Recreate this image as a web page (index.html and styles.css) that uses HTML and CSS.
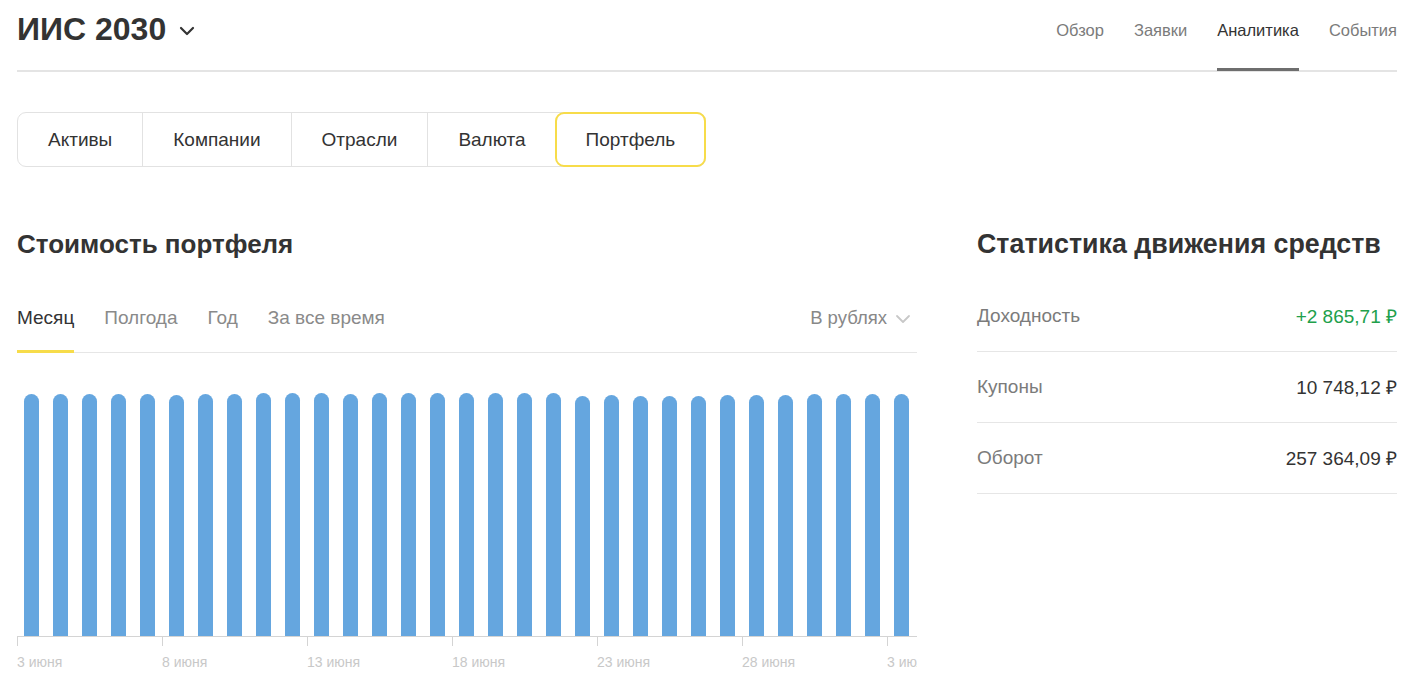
FILE: index.html
```html
<!DOCTYPE html>
<html lang="ru">
<head>
<meta charset="utf-8">
<link rel="stylesheet" href="styles.css">
</head>
<body>
<div class="page">
  <header class="header">
    <div class="account">
      <h1 class="account-title">ИИС 2030</h1>
      <svg class="account-chevron" width="16" height="10" viewBox="0 0 16 10"><path d="M2 2 L8 8 L14 2" fill="none" stroke="#333" stroke-width="2.2" stroke-linecap="round" stroke-linejoin="round"/></svg>
    </div>
    <nav class="nav">
      <a class="nav-item">Обзор</a>
      <a class="nav-item">Заявки</a>
      <a class="nav-item nav-item-active">Аналитика</a>
      <a class="nav-item">События</a>
    </nav>
  </header>

  <div class="segments">
    <div class="segment">Активы</div>
    <div class="segment">Компании</div>
    <div class="segment">Отрасли</div>
    <div class="segment">Валюта</div>
    <div class="segment segment-active">Портфель</div>
  </div>

  <div class="content">
    <section class="chart-col">
      <h2 class="section-title">Стоимость портфеля</h2>
      <div class="periods">
        <div class="period period-active">Месяц</div>
        <div class="period">Полгода</div>
        <div class="period">Год</div>
        <div class="period">За все время</div>
        <div class="currency">В рублях
          <svg class="currency-chevron" width="16" height="10" viewBox="0 0 16 10"><path d="M2 2 L8 8 L14 2" fill="none" stroke="#c8c8c8" stroke-width="1.8" stroke-linecap="round" stroke-linejoin="round"/></svg>
        </div>
      </div>
      <div class="chart">
        <div class="bars">
          <div class="slot"><div class="bar" style="height:242px"></div></div>
          <div class="slot"><div class="bar" style="height:242px"></div></div>
          <div class="slot"><div class="bar" style="height:242px"></div></div>
          <div class="slot"><div class="bar" style="height:242px"></div></div>
          <div class="slot"><div class="bar" style="height:242px"></div></div>
          <div class="slot"><div class="bar" style="height:241px"></div></div>
          <div class="slot"><div class="bar" style="height:242px"></div></div>
          <div class="slot"><div class="bar" style="height:242px"></div></div>
          <div class="slot"><div class="bar" style="height:243px"></div></div>
          <div class="slot"><div class="bar" style="height:243px"></div></div>
          <div class="slot"><div class="bar" style="height:243px"></div></div>
          <div class="slot"><div class="bar" style="height:242px"></div></div>
          <div class="slot"><div class="bar" style="height:243px"></div></div>
          <div class="slot"><div class="bar" style="height:243px"></div></div>
          <div class="slot"><div class="bar" style="height:243px"></div></div>
          <div class="slot"><div class="bar" style="height:243px"></div></div>
          <div class="slot"><div class="bar" style="height:243px"></div></div>
          <div class="slot"><div class="bar" style="height:243px"></div></div>
          <div class="slot"><div class="bar" style="height:243px"></div></div>
          <div class="slot"><div class="bar" style="height:240px"></div></div>
          <div class="slot"><div class="bar" style="height:241px"></div></div>
          <div class="slot"><div class="bar" style="height:240px"></div></div>
          <div class="slot"><div class="bar" style="height:240px"></div></div>
          <div class="slot"><div class="bar" style="height:240px"></div></div>
          <div class="slot"><div class="bar" style="height:241px"></div></div>
          <div class="slot"><div class="bar" style="height:241px"></div></div>
          <div class="slot"><div class="bar" style="height:241px"></div></div>
          <div class="slot"><div class="bar" style="height:242px"></div></div>
          <div class="slot"><div class="bar" style="height:242px"></div></div>
          <div class="slot"><div class="bar" style="height:242px"></div></div>
          <div class="slot"><div class="bar" style="height:242px"></div></div>
        </div>
        <div class="axis">
          <div class="tick"><span class="tick-mark"></span><span class="tick-label">3 июня</span></div>
          <div class="tick"><span class="tick-mark"></span><span class="tick-label">8 июня</span></div>
          <div class="tick"><span class="tick-mark"></span><span class="tick-label">13 июня</span></div>
          <div class="tick"><span class="tick-mark"></span><span class="tick-label">18 июня</span></div>
          <div class="tick"><span class="tick-mark"></span><span class="tick-label">23 июня</span></div>
          <div class="tick"><span class="tick-mark"></span><span class="tick-label">28 июня</span></div>
          <div class="tick"><span class="tick-mark"></span><span class="tick-label">3 июля</span></div>
        </div>
      </div>
    </section>

    <section class="stats-col">
      <h2 class="section-title">Статистика движения средств</h2>
      <div class="stats">
        <div class="stat-row">
          <span class="stat-label">Доходность</span>
          <span class="stat-value stat-positive">+2 865,71 ₽</span>
        </div>
        <div class="stat-row">
          <span class="stat-label">Купоны</span>
          <span class="stat-value">10 748,12 ₽</span>
        </div>
        <div class="stat-row">
          <span class="stat-label">Оборот</span>
          <span class="stat-value">257 364,09 ₽</span>
        </div>
      </div>
    </section>
  </div>
</div>
</body>
</html>
```

FILE: styles.css
```css
* { box-sizing: border-box; }

html, body {
  margin: 0;
  padding: 0;
  background: #fff;
}

body {
  font-family: "Liberation Sans", Arial, sans-serif;
  color: #333;
}

.page {
  padding: 0 16px 0 17px;
}

/* Header */
.header {
  display: flex;
  justify-content: space-between;
  align-items: stretch;
  height: 72px;
  border-bottom: 2px solid #e4e4e4;
}

.account {
  display: flex;
  align-items: center;
  gap: 13px;
  padding-bottom: 12px;
}

.account-title {
  margin: 0;
  font-size: 32px;
  font-weight: 700;
  color: #333;
}

.account-chevron {
  margin-top: 4px;
}

.nav {
  display: flex;
  gap: 30px;
}

.nav-item {
  display: flex;
  align-items: flex-start;
  padding-top: 21px;
  font-size: 16.5px;
  color: #7b7b7b;
  border-bottom: 3px solid transparent;
  margin-bottom: -1px;
}

.nav-item-active {
  color: #333;
  border-bottom-color: #6e6e6e;
}

/* Segmented control */
.segments {
  display: inline-flex;
  margin-top: 40px;
  height: 55px;
  border: 1px solid #e2e2e2;
  border-radius: 9px;
}

.segment {
  display: flex;
  align-items: center;
  padding: 0 30px;
  font-size: 19px;
  color: #333;
  border-left: 1px solid #e2e2e2;
}

.segment:first-child {
  border-left: none;
}

.segment-active {
  border: 2px solid #f7dc4a;
  border-radius: 9px;
  margin: -1px;
  padding: 0 29px;
}

/* Content */
.content {
  display: flex;
  gap: 60px;
  margin-top: 62px;
}

.chart-col {
  width: 900px;
}

.stats-col {
  flex: 1;
}

.section-title {
  margin: 0;
  font-size: 26px;
  font-weight: 700;
  color: #333;
  line-height: 30px;
  white-space: nowrap;
}

.stats-col .section-title {
  font-size: 26.8px;
}

.periods {
  display: flex;
  align-items: flex-start;
  gap: 30px;
  margin-top: 42px;
  height: 52px;
  border-bottom: 1px solid #e6e6e6;
}

.period {
  font-size: 19px;
  line-height: 22px;
  color: #8a8a8a;
  height: 52px;
  padding-top: 6px;
  border-bottom: 3px solid transparent;
  margin-bottom: -1px;
}

.period-active {
  color: #333;
  border-bottom-color: #f7dc4a;
}

.currency {
  margin-left: auto;
  display: flex;
  align-items: flex-start;
  gap: 8px;
  font-size: 18.5px;
  line-height: 22px;
  color: #888;
  padding-top: 6px;
  margin-right: 6px;
}

.currency-chevron {
  margin-top: 7px;
}

/* Chart */
.chart {
  width: 900px;
  overflow: hidden;
}

.bars {
  display: grid;
  grid-template-columns: repeat(31, 29px);
  height: 284px;
  align-items: end;
  border-bottom: 1px solid #d4d4d4;
}

.slot {
  display: flex;
  justify-content: center;
  align-items: flex-end;
  height: 100%;
}

.bar {
  width: 15px;
  background: #65a6df;
  border-radius: 7.5px 7.5px 0 0;
}

.axis {
  display: flex;
  width: 1100px;
  height: 40px;
}

.tick {
  width: 145px;
  flex: none;
  display: flex;
  flex-direction: column;
  align-items: flex-start;
}

.tick-mark {
  width: 1px;
  height: 9px;
  background: #d4d4d4;
}

.tick-label {
  margin-top: 8px;
  font-size: 14px;
  line-height: 16px;
  color: #c8c8c8;
  white-space: nowrap;
}

/* Stats */
.stats {
  margin-top: 22px;
}

.stat-row {
  display: flex;
  justify-content: space-between;
  align-items: center;
  height: 71px;
  border-bottom: 1px solid #e6e6e6;
  font-size: 19px;
}

.stat-label {
  color: #7b7b7b;
}

.stat-value {
  color: #333;
}

.stat-positive {
  color: #21a04b;
}
```
